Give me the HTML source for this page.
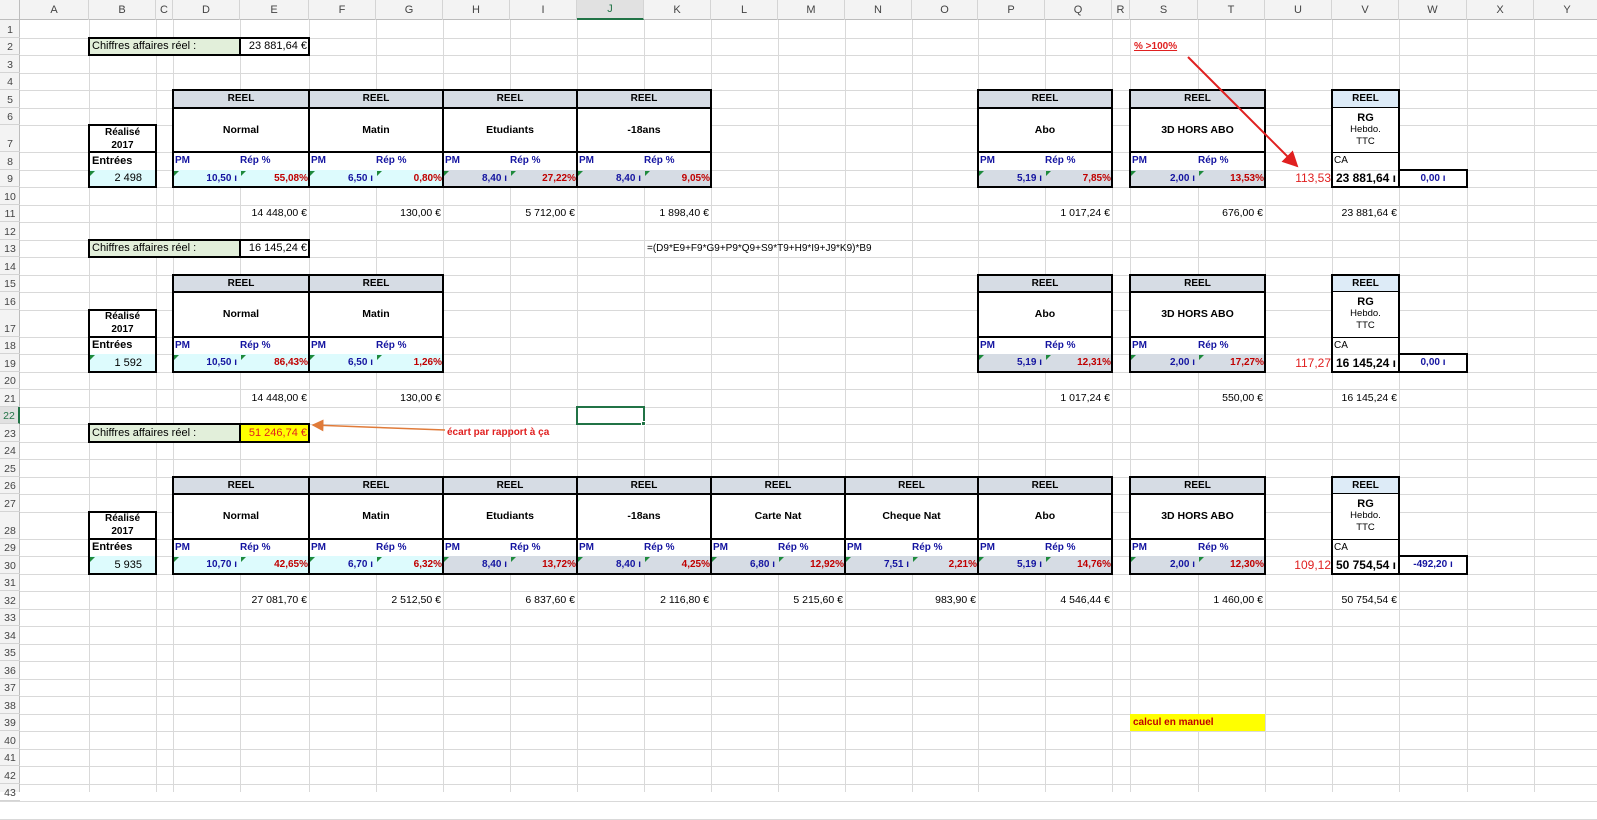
<!DOCTYPE html>
<html><head><meta charset="utf-8">
<style>
html,body{margin:0;padding:0;width:1597px;height:792px;overflow:hidden;background:#fff;font-family:"Liberation Sans",sans-serif;font-size:11px;}
.b{position:absolute;box-sizing:border-box;display:flex;align-items:center;white-space:nowrap;overflow:visible;}
.g{position:absolute;background:#d9d9d9;}
</style></head><body>
<div id="root"></div>
<svg width="1597" height="792" style="position:absolute;left:0;top:0;z-index:50;pointer-events:none">
<defs>
<marker id="ar" markerWidth="8" markerHeight="8" refX="7" refY="4" orient="auto"><path d="M0,0 L8,4 L0,8 z" fill="#e02020"/></marker>
<marker id="ao" markerWidth="8" markerHeight="8" refX="7" refY="4" orient="auto"><path d="M0,0 L8,4 L0,8 z" fill="#e07b39"/></marker>
</defs>
<line x1="1188" y1="57" x2="1297" y2="166" stroke="#e02020" stroke-width="2" marker-end="url(#ar)"/>
<line x1="445" y1="430" x2="313" y2="425" stroke="#e07b39" stroke-width="1.5" marker-end="url(#ao)"/>
</svg>
<script>
const L='ABCDEFGHIJKLMNOPQRSTUVWXYZ';
const XS=[20,89,156,173,240,309,376,443,510,577,644,711,778,845,912,978,1045,1112,1130,1198,1265,1332,1399,1467,1534,1601,1670];
const X={};for(let i=0;i<XS.length;i++)X[L[i]]=XS[i];
const nx=c=>L[L.indexOf(c)+1];
const T=[0,20];
for(let r=1;r<=45;r++){T[r+1]=T[r]+((r==7||r==17||r==28)?27:17.5);}
const root=document.getElementById('root');
function add(l,t,w,h,css,html){const d=document.createElement('div');d.className='b';d.style.cssText=`left:${l}px;top:${t}px;width:${w}px;height:${h}px;`+(css||'');if(html!==undefined)d.innerHTML=html;root.appendChild(d);return d;}
function box(c1,r1,c2,r2,css,html){const l=X[c1],rr=X[nx(c2)],t=T[r1],b=T[r2+1];return add(l,t,rr-l,b-t,css,html);}
function obox(c1,r1,c2,r2,css){const l=X[c1],rr=X[nx(c2)],t=T[r1],b=T[r2+1];return add(l-1,t-1,rr-l+2,b-t+2,css);}
// grid lines
for(let i=1;i<XS.length;i++){const g=document.createElement('div');g.className='g';g.style.cssText=`left:${XS[i]}px;top:20px;width:1px;height:772px`;root.appendChild(g);}
for(let r=1;r<=44;r++){const g=document.createElement('div');g.className='g';g.style.cssText=`left:0;top:${Math.round(T[r+1])}px;width:1597px;height:1px`;root.appendChild(g);}
// headers
add(0,0,1597,20,'background:#f3f3f3;border-bottom:1px solid #bdbdbd');
add(0,20,20,772,'background:#f3f3f3;border-right:1px solid #bdbdbd');
add(0,0,20,20,'background:#f3f3f3;border-right:1px solid #bdbdbd;border-bottom:1px solid #bdbdbd');
for(let i=0;i<25;i++){const c=L[i];const sel=c=='J';add(XS[i],0,XS[i+1]-XS[i],20,'justify-content:center;color:#444;border-right:1px solid #d4d4d4;'+(sel?'background:#e1e1e1;border-bottom:2px solid #217346;color:#217346;':''),c);}
for(let r=1;r<=43;r++){const sel=r==22;add(0,T[r],20,T[r+1]-T[r],'justify-content:center;align-items:flex-end;padding-bottom:1px;color:#444;font-size:10.5px;border-bottom:1px solid #d4d4d4;'+(sel?'background:#e1e1e1;border-right:2px solid #217346;color:#217346;':''),r);}
const BL='color:#1414a0;font-weight:bold;',RD='color:#c00000;font-weight:bold;';
const CY='#ddfbfd',GR='#d6dce4';
function tri(c,r){const d=add(X[c]+1,T[r]+1,0,0,'border-top:5px solid #1e8a3c;border-right:5px solid transparent;z-index:5');}
function chiffres(r,val,yellow){
 box('B',r,'D',r,'background:#e2efda;padding-left:3px;','Chiffres affaires réel :');
 box('E',r,'E',r,'justify-content:flex-end;padding-right:2px;'+(yellow?'background:#ffff00;color:#e02020;':''),val);
 obox('B',r,'E',r,'border:2px solid #000;z-index:6');
 obox('E',r,'E',r,'border-left:2px solid #000;z-index:6');
}
function realise(r,val){
 box('B',r,'B',r,'flex-direction:column;justify-content:center;font-weight:bold;font-size:10px;line-height:13px','<div>Réalisé</div><div>2017</div>');
 box('B',r+1,'B',r+1,'font-weight:bold;padding-left:3px','Entrées');
 box('B',r+2,'B',r+2,'background:'+CY+';justify-content:flex-end;padding-right:14px',val);tri('B',r+2);
 obox('B',r,'B',r+2,'border:2px solid #000;z-index:6');
 obox('B',r+1,'B',r+1,'border-top:2px solid #000;z-index:6');
}
function blk(c,r,title,pm,pct,bg){
 const c2=nx(c);
 box(c,r,c2,r,'background:#d6dce4;font-weight:bold;font-size:10px;justify-content:center','REEL');
 box(c,r+1,c2,r+2,'background:#fff;font-weight:bold;font-size:10.5px;justify-content:center',title);
 box(c,r+3,c,r+3,'background:#fff;'+BL+'font-size:10px;padding-left:2px','PM');
 box(c2,r+3,c2,r+3,'background:#fff;'+BL+'font-size:10px;','Rép %');
 box(c,r+4,c,r+4,'background:'+bg+';'+BL+'font-size:10px;justify-content:flex-end;padding-right:3px',pm+' ı');
 box(c2,r+4,c2,r+4,'background:'+bg+';'+RD+'font-size:10px;justify-content:flex-end;padding-right:1px',pct);
 tri(c,r+4);tri(c2,r+4);
 obox(c,r,c2,r+4,'border:2px solid #000;z-index:6');
 obox(c,r+1,c2,r+2,'border-top:2px solid #000;border-bottom:2px solid #000;z-index:6');
}
function rg(r,u,v,w){
 box('U',r+4,'U',r+4,'color:#e02020;font-size:12px;justify-content:flex-end;padding-right:1px',u);
 box('V',r,'V',r,'background:#ddebf7;font-weight:bold;font-size:10px;justify-content:center','REEL');
 box('V',r+1,'V',r+2,'background:#fff;flex-direction:column;justify-content:center;line-height:12px;font-size:9.5px','<div style="font-weight:bold;font-size:11px">RG</div><div>Hebdo.</div><div>TTC</div>');
 box('V',r+3,'V',r+3,'background:#fff;padding-left:2px;font-size:10px','CA');
 box('V',r+4,'V',r+4,'font-weight:bold;font-size:12px;justify-content:flex-end;padding-right:3px',v+' ı');
 obox('V',r,'V',r+4,'border:2px solid #000;z-index:6');
 obox('V',r+1,'V',r+2,'border-top:1px solid #000;border-bottom:1px solid #000;z-index:6');
 box('W',r+4,'W',r+4,BL+'font-size:10px;justify-content:center',w+' ı');
 obox('W',r+4,'W',r+4,'border:2px solid #000;z-index:6');
}
function sums(r,obj){for(const c in obj)box(c,r,c,r,'justify-content:flex-end;padding-right:2px;font-size:10.5px',obj[c]);}
// section 1
chiffres(2,'23 881,64 €');
realise(7,'2 498');
blk('D',5,'Normal','10,50','55,08%',CY);
blk('F',5,'Matin','6,50','0,80%',CY);
blk('H',5,'Etudiants','8,40','27,22%',GR);
blk('J',5,'-18ans','8,40','9,05%',GR);
blk('P',5,'Abo','5,19','7,85%',GR);
blk('S',5,'3D HORS ABO','2,00','13,53%',GR);
rg(5,'113,53','23 881,64','0,00');
sums(11,{E:'14 448,00 €',G:'130,00 €',I:'5 712,00 €',K:'1 898,40 €',Q:'1 017,24 €',T:'676,00 €',V:'23 881,64 €'});
box('S',2,'S',2,'color:#e02020;font-weight:bold;font-size:10px;text-decoration:underline;padding-left:4px','% &gt;100%');
// section 2
chiffres(13,'16 145,24 €');
box('K',13,'K',13,'padding-left:3px;font-size:10px','=(D9*E9+F9*G9+P9*Q9+S9*T9+H9*I9+J9*K9)*B9');
realise(17,'1 592');
blk('D',15,'Normal','10,50','86,43%',CY);
blk('F',15,'Matin','6,50','1,26%',CY);
blk('P',15,'Abo','5,19','12,31%',GR);
blk('S',15,'3D HORS ABO','2,00','17,27%',GR);
rg(15,'117,27','16 145,24','0,00');
sums(21,{E:'14 448,00 €',G:'130,00 €',Q:'1 017,24 €',T:'550,00 €',V:'16 145,24 €'});
obox('J',22,'J',22,'border:2px solid #217346;z-index:7');
add(X.K-3,T[23]-3,5,5,'background:#217346;border:1px solid #fff;z-index:8');
// section 3
chiffres(23,'51 246,74 €',true);
box('H',23,'H',23,'color:#e02020;font-weight:bold;font-size:10px;padding-left:4px','écart par rapport à ça');
realise(28,'5 935');
blk('D',26,'Normal','10,70','42,65%',CY);
blk('F',26,'Matin','6,70','6,32%',CY);
blk('H',26,'Etudiants','8,40','13,72%',GR);
blk('J',26,'-18ans','8,40','4,25%',GR);
blk('L',26,'Carte Nat','6,80','12,92%',GR);
blk('N',26,'Cheque Nat','7,51','2,21%',GR);
blk('P',26,'Abo','5,19','14,76%',GR);
blk('S',26,'3D HORS ABO','2,00','12,30%',GR);
rg(26,'109,12','50 754,54','-492,20');
sums(32,{E:'27 081,70 €',G:'2 512,50 €',I:'6 837,60 €',K:'2 116,80 €',M:'5 215,60 €',O:'983,90 €',Q:'4 546,44 €',T:'1 460,00 €',V:'50 754,54 €'});
box('S',39,'T',39,'background:#ffff00;color:#c00000;font-weight:bold;font-size:10px;padding-left:3px','calcul en manuel');
</script>
</body></html>
